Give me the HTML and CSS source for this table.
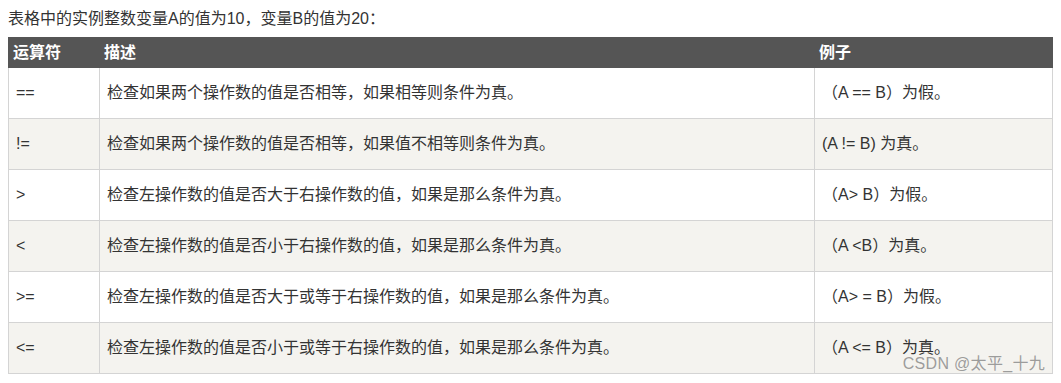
FILE: index.html
```html
<!DOCTYPE html>
<html lang="zh-CN">
<head>
<meta charset="utf-8">
<title>运算符</title>
<link rel="stylesheet" href="styles.css">
</head>
<body>
<div class="page">
  <p class="intro">表格中的实例整数变量A的值为10，变量B的值为20：</p>
  <table class="ops">
    <colgroup>
      <col class="c1"><col class="c2"><col class="c3">
    </colgroup>
    <thead>
      <tr><th>运算符</th><th>描述</th><th>例子</th></tr>
    </thead>
    <tbody>
      <tr><td>==</td><td>检查如果两个操作数的值是否相等，如果相等则条件为真。</td><td>（A == B）为假。</td></tr>
      <tr><td>!=</td><td>检查如果两个操作数的值是否相等，如果值不相等则条件为真。</td><td>(A != B) 为真。</td></tr>
      <tr><td>&gt;</td><td>检查左操作数的值是否大于右操作数的值，如果是那么条件为真。</td><td>（A&gt; B）为假。</td></tr>
      <tr><td>&lt;</td><td>检查左操作数的值是否小于右操作数的值，如果是那么条件为真。</td><td>（A &lt;B）为真。</td></tr>
      <tr><td>&gt;=</td><td>检查左操作数的值是否大于或等于右操作数的值，如果是那么条件为真。</td><td>（A&gt; = B）为假。</td></tr>
      <tr><td>&lt;=</td><td>检查左操作数的值是否小于或等于右操作数的值，如果是那么条件为真。</td><td>（A &lt;= B）为真。</td></tr>
    </tbody>
  </table>
  <div class="watermark">CSDN @太平_十九</div>
</div>
</body>
</html>
```

FILE: styles.css
```css
html, body {
  margin: 0;
  padding: 0;
  background: #ffffff;
}
body {
  padding: 8px;
  font-family: "Liberation Sans", "Noto Sans CJK SC", sans-serif;
  font-size: 16px;
  color: #333333;
}
.page {
  position: relative;
  width: 1044px;
}
.intro {
  margin: 0 0 8px 0;
  line-height: 21px;
  height: 21px;
  color: #333333;
}
.ops {
  border-collapse: collapse;
  table-layout: fixed;
  width: 1044px;
}
.c1 { width: 91px; }
.c2 { width: 715px; }
.c3 { width: 238px; }
.ops th {
  background: #555555;
  color: #ffffff;
  font-weight: bold;
  text-align: left;
  height: 30px;
  padding: 0 4px;
  border: 1px solid #555555;
  line-height: 20px;
  box-sizing: border-box;
}
.ops td {
  height: 51px;
  padding: 0 7px;
  border: 1px solid #d4d4d4;
  line-height: 20px;
  box-sizing: border-box;
  vertical-align: middle;
}
.ops tbody tr:nth-child(even) td {
  background: #f4f3ef;
}
.watermark {
  position: absolute;
  right: 7px;
  bottom: 1px;
  font-size: 16px;
  line-height: 18px;
  color: rgba(140, 140, 140, 0.85);
  letter-spacing: 0.3px;
}
```
